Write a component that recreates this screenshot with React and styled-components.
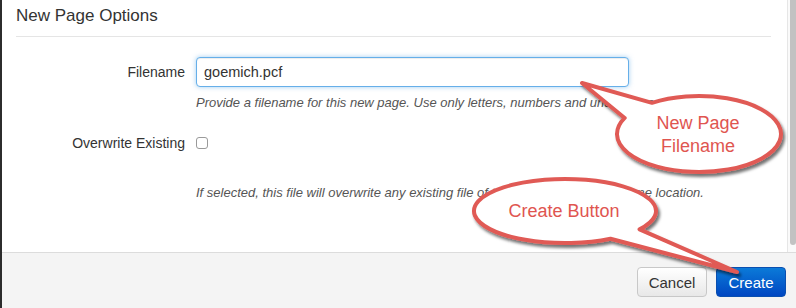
import React from "react";
import styled, { createGlobalStyle } from "styled-components";

const GlobalStyle = createGlobalStyle`
  html, body {
    margin: 0;
    padding: 0;
    background: #fff;
  }
  body {
    font-family: "Liberation Sans", Arial, sans-serif;
    color: #333;
  }
`;

function Callout({ cx, cy, rx, ry, from, to, tip, lines }) {
  const pt = (deg) => {
    const r = (deg * Math.PI) / 180;
    return [cx + rx * Math.cos(r), cy + ry * Math.sin(r)];
  };
  const [ax, ay] = pt(to);
  const [bx, by] = pt(from);
  const d = `M ${ax} ${ay} A ${rx} ${ry} 0 1 1 ${bx} ${by} L ${tip[0]} ${tip[1]} Z`;
  const step = 23;
  const top = cy - ((lines.length - 1) * step) / 2;
  return (
    <g>
      <path
        d={d}
        fill="#fff"
        stroke="#e05a55"
        strokeWidth="4"
        strokeLinejoin="round"
        filter="url(#shadow)"
      />
      {lines.map((line, i) => (
        <CalloutText
          key={line}
          x={cx - 1}
          y={top + i * step}
          textAnchor="middle"
          dominantBaseline="central"
        >
          {line}
        </CalloutText>
      ))}
    </g>
  );
}

function App() {
  return (
    <Page>
      <GlobalStyle />
      <Upper>
        <Content>
          <Header>New Page Options</Header>
          <Form>
            <Row>
              <Label>Filename</Label>
              <Field>
                <TextInput defaultValue="goemich.pcf" />
              </Field>
            </Row>
            <Help>
              Provide a filename for this new page. Use only letters, numbers
              and underscores.
            </Help>
            <Row $gap={21}>
              <Label>Overwrite Existing</Label>
              <Field>
                <Checkbox type="checkbox" />
              </Field>
            </Row>
            <Help $gap={31}>
              If selected, this file will overwrite any existing file of the
              same name in the same location.
            </Help>
          </Form>
        </Content>
        <Scrollbar>
          <Thumb />
        </Scrollbar>
      </Upper>
      <Footer>
        <Button>Cancel</Button>
        <Button $primary>Create</Button>
      </Footer>

      <Overlay width="796" height="308" viewBox="0 0 796 308">
        <defs>
          <filter id="shadow" x="-20%" y="-20%" width="140%" height="150%">
            <feDropShadow
              dx="2"
              dy="3"
              stdDeviation="1.6"
              floodColor="#000"
              floodOpacity="0.55"
            />
          </filter>
        </defs>
        <Callout
          cx={699}
          cy={134}
          rx={82}
          ry={38}
          from={205}
          to={235}
          tip={[582, 83]}
          lines={["New Page", "Filename"]}
        />
        <Callout
          cx={565}
          cy={211}
          rx={91}
          ry={32}
          from={35}
          to={60}
          tip={[737, 272]}
          lines={["Create Button"]}
        />
      </Overlay>
    </Page>
  );
}

export default App;

const Page = styled.div`
  position: relative;
  width: 796px;
  height: 308px;
  box-sizing: border-box;
  border-left: 2px solid #2c2c2c;
  display: flex;
  flex-direction: column;
  overflow: hidden;
`;

const Upper = styled.div`
  flex: 1;
  display: flex;
  min-height: 0;
`;

const Content = styled.div`
  flex: 1;
  padding: 0 16px 0 14px;
`;

const Header = styled.div`
  height: 32px;
  padding-bottom: 4px;
  display: flex;
  align-items: center;
  border-bottom: 1px solid #e5e5e5;
  font-size: 17px;
  color: #333;
`;

const Form = styled.div`
  padding-top: 20px;
`;

const Row = styled.div`
  display: grid;
  grid-template-columns: 169px 1fr;
  column-gap: 11px;
  align-items: center;
  margin-top: ${(p) => p.$gap || 0}px;
`;

const Label = styled.label`
  text-align: right;
  font-size: 14px;
  color: #333;
  line-height: 20px;
`;

const Field = styled.div`
  display: flex;
  align-items: center;
`;

const TextInput = styled.input`
  width: 433px;
  height: 30px;
  box-sizing: border-box;
  padding: 0 7px;
  border: 1px solid #66afe9;
  border-radius: 4px;
  box-shadow: inset 0 1px 1px rgba(0, 0, 0, 0.075),
    0 0 5px rgba(102, 175, 233, 0.6);
  font-family: "Liberation Sans", Arial, sans-serif;
  font-size: 14.5px;
  color: #333;
  outline: none;
`;

const Checkbox = styled.input`
  appearance: none;
  margin: 0;
  width: 12px;
  height: 12px;
  box-sizing: border-box;
  border: 1px solid #9a9a9a;
  border-radius: 3px;
  background: #fff;
`;

const Help = styled.div`
  margin: ${(p) => p.$gap || 7}px 0 0 180px;
  font-size: 13px;
  line-height: 18px;
  font-style: italic;
  color: #555;
  white-space: nowrap;
`;

const Scrollbar = styled.div`
  width: 9px;
  box-sizing: border-box;
  border-left: 1px solid #e6e6e6;
  background: #fafafa;
  padding: 0 0 7px 2px;
  display: flex;
`;

const Thumb = styled.div`
  flex: 1;
  background: #c2c2c2;
  border-radius: 0 0 4px 4px;
`;

const Footer = styled.div`
  flex: none;
  height: 56px;
  box-sizing: border-box;
  border-top: 1px solid #dcdcdc;
  background: #f4f4f4;
  display: flex;
  justify-content: flex-end;
  align-items: flex-start;
  gap: 9px;
  padding: 14px 10px 0 0;
`;

const Button = styled.button`
  width: 70px;
  height: 30px;
  border-radius: 4px;
  font-family: "Liberation Sans", Arial, sans-serif;
  font-size: 15px;
  cursor: pointer;
  border: 1px solid ${(p) => (p.$primary ? "#0a4fb0" : "#c8c8c8")};
  color: ${(p) => (p.$primary ? "#fff" : "#333")};
  background: ${(p) =>
    p.$primary
      ? "linear-gradient(#0b7ad8, #0047c2)"
      : "linear-gradient(#ffffff, #e8e8e8)"};
`;

const Overlay = styled.svg`
  position: absolute;
  left: -2px;
  top: 0;
  pointer-events: none;
`;

const CalloutText = styled.text`
  font-family: "Liberation Sans", Arial, sans-serif;
  font-size: 18px;
  fill: #e05550;
`;
